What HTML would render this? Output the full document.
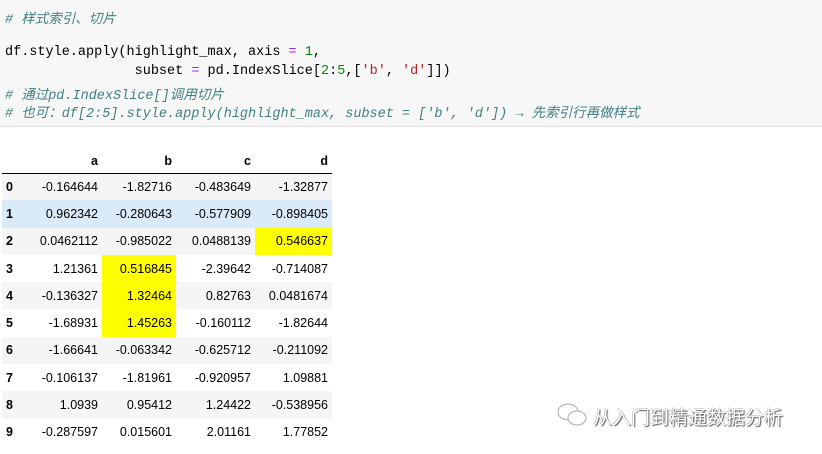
<!DOCTYPE html>
<html><head><meta charset="utf-8"><style>
body{margin:0;width:822px;height:454px;background:#fff;position:relative;overflow:hidden;font-family:"Liberation Sans",sans-serif}
.code{position:absolute;left:0;top:0;width:822px;height:126px;background:#f7f7f7;border-bottom:1px solid #e0e0e0}
.ln{position:absolute;left:5px;font-family:"Liberation Mono","Noto Sans CJK SC",monospace;font-size:13.5px;white-space:pre;color:#000}
.cm{color:#408080;font-style:italic}
.k{color:#aa22ff}.n{color:#080}.s{color:#ba2121}
table{position:absolute;left:2px;top:150px;border-collapse:collapse;font-size:12.5px;color:#000;table-layout:fixed;width:330px}
th,td{text-align:right;padding:0 4px;height:27.3px;box-sizing:border-box}
thead th{height:23px;border-bottom:1px solid #000;font-weight:bold;padding-bottom:0}
tbody th{text-align:left;font-weight:bold}
tbody tr:nth-child(odd){background:#f5f5f5}
tbody tr.h{background:#dbeaf8}
td.y{background:#ffff00}
.wm{position:absolute;left:593px;top:403px;font-family:"Noto Sans CJK SC",sans-serif;font-size:19px;color:#fff;text-shadow:1px 1px 1px #555,-0.5px -0.5px 0 #aaa}
</style></head><body>
<div class="code">
<div class="ln cm" style="top:7px"># 样式索引、切片</div>
<div class="ln" style="top:45px">df.style.apply(highlight_max, axis <span class="k">=</span> <span class="n">1</span>,</div>
<div class="ln" style="top:64px">                subset <span class="k">=</span> pd.IndexSlice[<span class="n">2</span>:<span class="n">5</span>,[<span class="s">'b'</span>, <span class="s">'d'</span>]])</div>
<div class="ln cm" style="top:83px"># 通过pd.IndexSlice[]调用切片</div>
<div class="ln cm" style="top:101px"># 也可：df[2:5].style.apply(highlight_max, subset = ['b', 'd']) → 先索引行再做样式</div>
</div>
<table>
<colgroup><col style="width:20px"><col style="width:80px"><col style="width:74px"><col style="width:79px"><col style="width:77px"></colgroup>
<thead><tr><th></th><th>a</th><th>b</th><th>c</th><th>d</th></tr></thead>
<tbody>
<tr><th>0</th><td>-0.164644</td><td>-1.82716</td><td>-0.483649</td><td>-1.32877</td></tr>
<tr class="h"><th>1</th><td>0.962342</td><td>-0.280643</td><td>-0.577909</td><td>-0.898405</td></tr>
<tr><th>2</th><td>0.0462112</td><td>-0.985022</td><td>0.0488139</td><td class="y">0.546637</td></tr>
<tr><th>3</th><td>1.21361</td><td class="y">0.516845</td><td>-2.39642</td><td>-0.714087</td></tr>
<tr><th>4</th><td>-0.136327</td><td class="y">1.32464</td><td>0.82763</td><td>0.0481674</td></tr>
<tr><th>5</th><td>-1.68931</td><td class="y">1.45263</td><td>-0.160112</td><td>-1.82644</td></tr>
<tr><th>6</th><td>-1.66641</td><td>-0.063342</td><td>-0.625712</td><td>-0.211092</td></tr>
<tr><th>7</th><td>-0.106137</td><td>-1.81961</td><td>-0.920957</td><td>1.09881</td></tr>
<tr><th>8</th><td>1.0939</td><td>0.95412</td><td>1.24422</td><td>-0.538956</td></tr>
<tr><th>9</th><td>-0.287597</td><td>0.015601</td><td>2.01161</td><td>1.77852</td></tr>
</tbody></table>
<svg style="position:absolute;left:556px;top:402px" width="34" height="26" viewBox="0 0 34 26" fill="none" stroke="#aaa" stroke-width="1">
<ellipse cx="12" cy="10" rx="10" ry="8"/><ellipse cx="21" cy="16" rx="9" ry="7" fill="#fff"/></svg>
<div class="wm">从入门到精通数据分析</div>
</body></html>
